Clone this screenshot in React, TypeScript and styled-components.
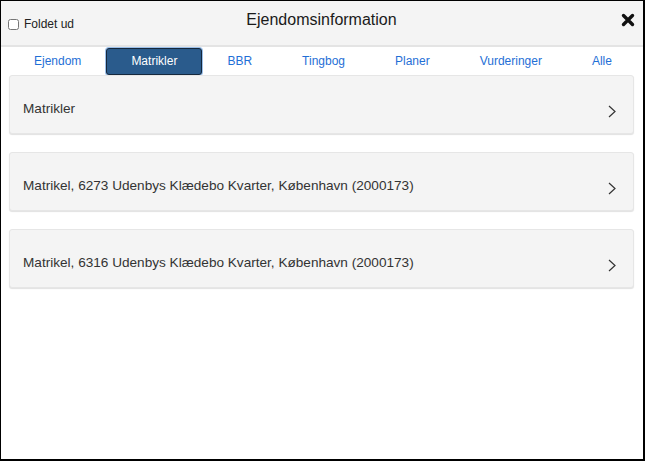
import { useState } from "react";
import styled, { createGlobalStyle } from "styled-components";

const GlobalStyle = createGlobalStyle`
  html, body {
    margin: 0;
    padding: 0;
    background: #ffffff;
  }
  body {
    font-family: "Liberation Sans", Arial, sans-serif;
  }
`;

const Frame = styled.div`
  box-sizing: border-box;
  width: 645px;
  height: 461px;
  border-top: 1px solid #000;
  border-left: 1px solid #000;
  border-right: 2px solid #000;
  border-bottom: 2px solid #000;
  background: #fff;
  display: flex;
  flex-direction: column;
`;

const Header = styled.div`
  height: 44px;
  background: #f4f4f4;
  border-bottom: 2px solid #e4e4e4;
  display: grid;
  grid-template-columns: 1fr auto 1fr;
  align-items: center;
  padding: 0 8px 0 7px;
`;

const Toggle = styled.label`
  display: flex;
  align-items: center;
  gap: 5px;
  font-size: 12px;
  color: #222;
  padding-top: 2px;

  input {
    margin: 0;
    width: 11px;
    height: 11px;
  }
`;

const Title = styled.h1`
  margin: 0;
  font-size: 16px;
  font-weight: normal;
  color: #1a1a1a;
  padding-bottom: 7px;
`;

const CloseButton = styled.button`
  justify-self: end;
  border: none;
  background: none;
  padding: 0;
  margin-bottom: 7px;
  width: 14px;
  height: 14px;
  cursor: pointer;
  display: flex;
`;

const TabBar = styled.nav`
  height: 28px;
  display: flex;
  justify-content: space-between;
  align-items: center;
  padding: 0 9px 0 8px;
`;

const Tab = styled.button<{ $active?: boolean }>`
  font-family: "Liberation Sans", Arial, sans-serif;
  font-size: 12px;
  height: 27px;
  padding: 0 24px;
  border-radius: 3px;
  cursor: pointer;
  border: 1px solid ${(p) => (p.$active ? "#15283d" : "transparent")};
  background: ${(p) => (p.$active ? "#2a5b8c" : "transparent")};
  color: ${(p) => (p.$active ? "#fff" : "#1f6fd6")};
  box-shadow: ${(p) => (p.$active ? "0 0 0 1px #9cc0ea" : "none")};
`;

const List = styled.div`
  display: flex;
  flex-direction: column;
  gap: 18px;
  padding: 0 9px 0 8px;
`;

const Card = styled.div`
  box-sizing: border-box;
  height: 59px;
  display: flex;
  align-items: center;
  justify-content: space-between;
  padding: 8px 17px 0 13px;
  background: #f4f4f4;
  border: 1px solid #e6e6e6;
  border-radius: 3px;
  box-shadow: 0 1px 1px rgba(0, 0, 0, 0.12);
  font-size: 13.6px;
  color: #333;
  cursor: pointer;
`;

const Chevron = styled.svg`
  width: 8px;
  height: 13px;
  margin-top: 6px;
`;

const tabs = ["Ejendom", "Matrikler", "BBR", "Tingbog", "Planer", "Vurderinger", "Alle"];

const items = [
  "Matrikler",
  "Matrikel, 6273 Udenbys Klædebo Kvarter, København (2000173)",
  "Matrikel, 6316 Udenbys Klædebo Kvarter, København (2000173)",
];

export default function App() {
  const [active, setActive] = useState("Matrikler");
  const [folded, setFolded] = useState(false);

  return (
    <>
      <GlobalStyle />
      <Frame>
        <Header>
          <Toggle>
            <input type="checkbox" checked={folded} onChange={() => setFolded(!folded)} />
            Foldet ud
          </Toggle>
          <Title>Ejendomsinformation</Title>
          <CloseButton aria-label="Luk">
            <svg width="14" height="14" viewBox="0 0 14 14">
              <path d="M2.5 2.5 L11.5 11.5 M11.5 2.5 L2.5 11.5" stroke="#111" strokeWidth="3.4" strokeLinecap="round" />
            </svg>
          </CloseButton>
        </Header>
        <TabBar>
          {tabs.map((t) => (
            <Tab key={t} $active={t === active} onClick={() => setActive(t)}>
              {t}
            </Tab>
          ))}
        </TabBar>
        <List>
          {items.map((label) => (
            <Card key={label}>
              <span>{label}</span>
              <Chevron viewBox="0 0 8 13">
                <polyline points="1,1 7,6.5 1,12" fill="none" stroke="#333" strokeWidth="1.2" />
              </Chevron>
            </Card>
          ))}
        </List>
      </Frame>
    </>
  );
}
